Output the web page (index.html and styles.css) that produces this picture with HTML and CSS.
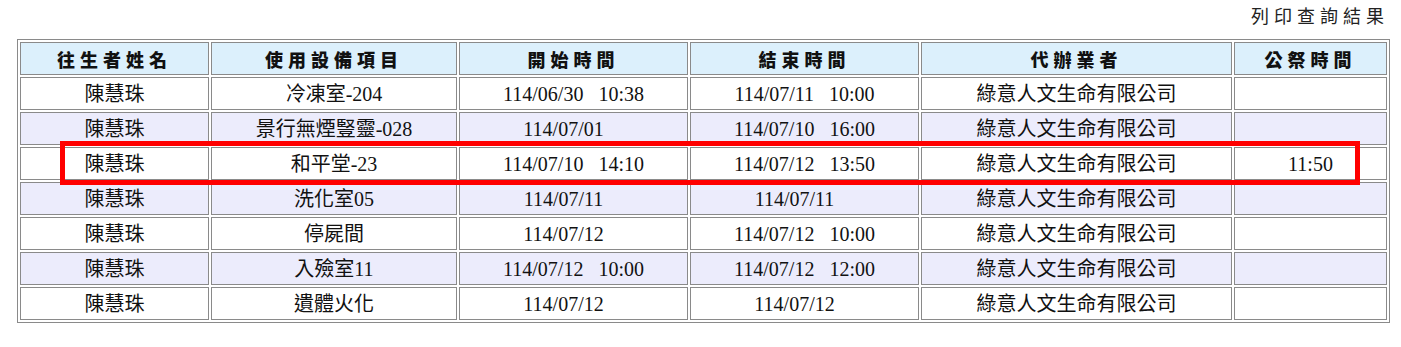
FILE: index.html
```html
<!DOCTYPE html>
<html lang="zh-Hant">
<head>
<meta charset="utf-8">
<title>列印查詢結果</title>
<link rel="stylesheet" href="styles.css">
</head>
<body>
<div class="page">
  <div class="title">列印查詢結果</div>
  <div class="table-wrap">
    <table class="result">
      <colgroup>
        <col class="c1"><col class="c2"><col class="c3"><col class="c4"><col class="c5"><col class="c6">
      </colgroup>
      <thead>
        <tr>
          <th>往生者姓名</th>
          <th>使用設備項目</th>
          <th>開始時間</th>
          <th>結束時間</th>
          <th>代辦業者</th>
          <th>公祭時間</th>
        </tr>
      </thead>
      <tbody>
        <tr>
          <td>陳慧珠</td><td>冷凍室-204</td><td>114/06/30&nbsp;&nbsp;&nbsp;10:38</td><td>114/07/11&nbsp;&nbsp;&nbsp;10:00</td><td>綠意人文生命有限公司</td><td></td>
        </tr>
        <tr class="alt">
          <td>陳慧珠</td><td>景行無煙豎靈-028</td><td>114/07/01&nbsp;&nbsp;&nbsp;&nbsp;</td><td>114/07/10&nbsp;&nbsp;&nbsp;16:00</td><td>綠意人文生命有限公司</td><td></td>
        </tr>
        <tr>
          <td>陳慧珠</td><td>和平堂-23</td><td>114/07/10&nbsp;&nbsp;&nbsp;14:10</td><td>114/07/12&nbsp;&nbsp;&nbsp;13:50</td><td>綠意人文生命有限公司</td><td>11:50</td>
        </tr>
        <tr class="alt">
          <td>陳慧珠</td><td>洗化室05</td><td>114/07/11&nbsp;&nbsp;&nbsp;&nbsp;</td><td>114/07/11&nbsp;&nbsp;&nbsp;&nbsp;</td><td>綠意人文生命有限公司</td><td></td>
        </tr>
        <tr>
          <td>陳慧珠</td><td>停屍間</td><td>114/07/12&nbsp;&nbsp;&nbsp;&nbsp;</td><td>114/07/12&nbsp;&nbsp;&nbsp;10:00</td><td>綠意人文生命有限公司</td><td></td>
        </tr>
        <tr class="alt">
          <td>陳慧珠</td><td>入殮室11</td><td>114/07/12&nbsp;&nbsp;&nbsp;10:00</td><td>114/07/12&nbsp;&nbsp;&nbsp;12:00</td><td>綠意人文生命有限公司</td><td></td>
        </tr>
        <tr>
          <td>陳慧珠</td><td>遺體火化</td><td>114/07/12&nbsp;&nbsp;&nbsp;&nbsp;</td><td>114/07/12&nbsp;&nbsp;&nbsp;&nbsp;</td><td>綠意人文生命有限公司</td><td></td>
        </tr>
      </tbody>
    </table>
    <div class="highlight"></div>
  </div>
</div>
</body>
</html>
```

FILE: styles.css
```css
html, body {
  margin: 0;
  padding: 0;
  background: #ffffff;
}

.page {
  padding: 0 12px 0 17px;
  font-family: "Liberation Serif", "Noto Sans CJK TC", serif;
  color: #111111;
}

.title {
  text-align: right;
  font-family: "Noto Sans CJK TC", sans-serif;
  font-size: 18px;
  letter-spacing: 5px;
  line-height: 24px;
  padding-top: 3px;
  margin-bottom: 12px;
  color: #222222;
}

.table-wrap {
  position: relative;
}

.result {
  table-layout: fixed;
  width: 1373px;
  border: 1px solid #8a8a8a;
  border-spacing: 2px;
  border-collapse: separate;
}

.result col.c1 { width: 189px; }
.result col.c2 { width: 246px; }
.result col.c3 { width: 229px; }
.result col.c4 { width: 229px; }
.result col.c5 { width: 311px; }
.result col.c6 { width: 153px; }

.result th,
.result td {
  box-sizing: border-box;
  height: 33px;
  padding: 0 1px;
  border: 1px solid #8a8a8a;
  text-align: center;
  vertical-align: middle;
  white-space: nowrap;
}

.result th {
  background: #dcf0fc;
  font-family: "Noto Sans CJK TC", sans-serif;
  font-weight: 900;
  font-size: 18px;
  letter-spacing: 5px;
  color: #111111;
  line-height: 24px;
}

.result td {
  background: #ffffff;
  font-size: 20px;
  line-height: 24px;
}

.result tr.alt td {
  background: #ececfc;
}

.highlight {
  position: absolute;
  left: 43px;
  top: 102px;
  width: 1300px;
  height: 44px;
  box-sizing: border-box;
  border: 5px solid #ff0000;
  pointer-events: none;
}
```
